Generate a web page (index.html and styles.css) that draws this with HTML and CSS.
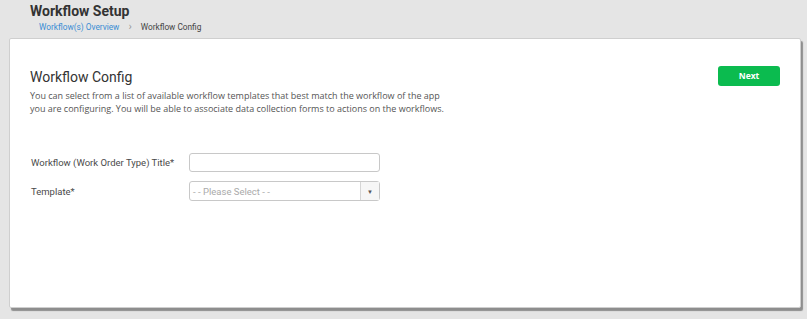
FILE: index.html
```html
<!DOCTYPE html>
<html>
<head>
<meta charset="utf-8">
<link rel="stylesheet" href="styles.css">
</head>
<body>
<header class="page-head">
  <h1 class="page-title">Workflow Setup</h1>
  <nav class="crumbs">
    <a class="crumb-link">Workflow(s) Overview</a>
    <span class="crumb-sep">&#x203A;</span>
    <span class="crumb-current">Workflow Config</span>
  </nav>
</header>
<main class="card">
  <div class="card-top">
    <div class="intro">
      <h2 class="section-title">Workflow Config</h2>
      <p class="desc">You can select from a list of available workflow templates that best match the workflow of the app you are configuring. You will be able to associate data collection forms to actions on the workflows.</p>
    </div>
    <button class="btn-next">Next</button>
  </div>
  <form class="form">
    <div class="row">
      <label class="label">Workflow (Work Order Type) Title*</label>
      <input class="input" type="text">
    </div>
    <div class="row">
      <label class="label">Template*</label>
      <div class="select">
        <span class="placeholder">- - Please Select - -</span>
        <span class="arrow">&#x25BC;</span>
      </div>
    </div>
  </form>
</main>
</body>
</html>
```
FILE: styles.css
```css
* { box-sizing: border-box; }
html, body { margin: 0; padding: 0; }
body {
  background: #e5e5e5;
  font-family: Roboto, "Noto Sans", sans-serif;
  width: 807px;
  height: 319px;
  overflow: hidden;
}
.page-head {
  padding: 3px 0 0 30px;
  height: 38px;
}
.page-title {
  margin: 0;
  font-size: 14px;
  font-weight: 700;
  color: #333;
  line-height: 17px;
}
.crumbs {
  display: flex;
  align-items: center;
  margin: 1px 0 0 9px;
  font-size: 8.3px;
  line-height: 12px;
}
.crumb-link { color: #3a8dd4; }
.crumb-sep { color: #999; margin: 0 9px 0 9px; font-size: 11px; }
.crumb-current { color: #444; }
.card {
  margin: 0 6px 0 9px;
  height: 270px;
  background: #fff;
  border: 1px solid #cfcfcf;
  border-radius: 2px;
  box-shadow: 2px 3px 1px #8e8e8e;
  padding: 27px 20px 0 20px;
}
.card-top {
  display: flex;
  justify-content: space-between;
  align-items: flex-start;
}
.section-title {
  margin: 2px 0 0 0;
  font-size: 14px;
  font-weight: 400;
  color: #333;
  line-height: 18px;
}
.desc {
  margin: 3px 0 0 0;
  font-family: "Open Sans", sans-serif;
  font-size: 9px;
  line-height: 13px;
  color: #555;
  width: 420px;
}
.btn-next {
  width: 62px;
  height: 20px;
  border: 0;
  border-radius: 3px;
  background: #0bbb4f;
  color: #fff;
  font-family: "Open Sans", sans-serif;
  font-weight: 700;
  font-size: 8.5px;
  padding: 0 0 1px 0;
}
.form { margin-top: 38px; }
.row {
  display: flex;
  align-items: center;
  margin-bottom: 9px;
}
.label {
  width: 159px;
  padding-left: 1px;
  font-size: 9.5px;
  color: #4a4a4a;
}
.input {
  width: 191px;
  height: 19px;
  border: 1px solid #c8c8c8;
  border-radius: 3px;
  margin: 0;
}
.select {
  width: 191px;
  height: 20px;
  border: 1px solid #c8c8c8;
  border-radius: 3px;
  display: flex;
  align-items: center;
  justify-content: space-between;
}
.placeholder {
  padding-left: 3px;
  font-size: 9.5px;
  color: #aaa;
}
.arrow {
  width: 19px;
  height: 100%;
  border-left: 1px solid #d5d5d5;
  background: #f6f6f6;
  display: flex;
  align-items: center;
  justify-content: center;
  font-size: 6px;
  color: #555;
}
```
